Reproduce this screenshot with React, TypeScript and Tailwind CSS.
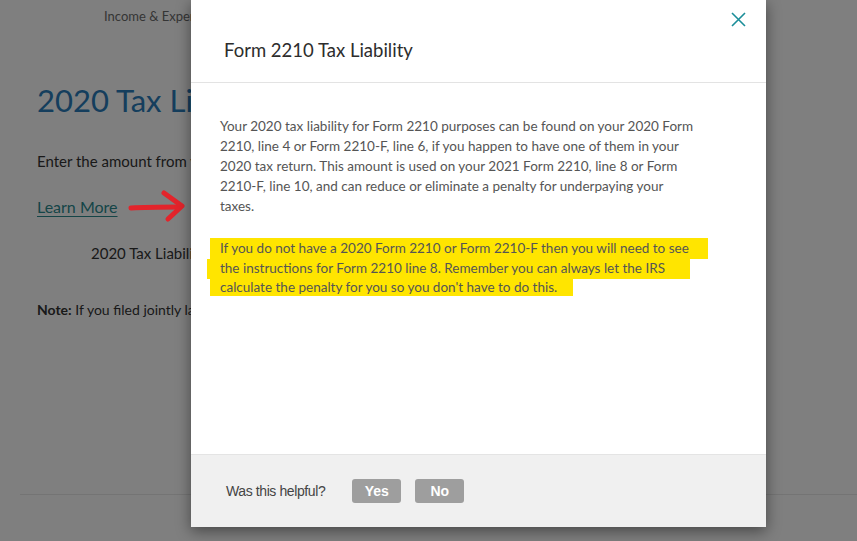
import React from "react";

const P1 = [
  "Your 2020 tax liability for Form 2210 purposes can be found on your 2020 Form",
  "2210, line 4 or Form 2210-F, line 6, if you happen to have one of them in your",
  "2020 tax return. This amount is used on your 2021 Form 2210, line 8 or Form",
  "2210-F, line 10, and can reduce or eliminate a penalty for underpaying your",
  "taxes.",
];

export default function App() {
  return (
    <div className="relative w-[857px] h-[541px] overflow-hidden bg-white" style={{ fontFamily: "Lato, 'Open Sans', sans-serif" }}>
      {/* underlying page */}
      <div className="pt-[6px]">
        <div className="w-[191px] overflow-hidden whitespace-nowrap pl-[37px]">
          <div className="pl-[67px] text-[13px] text-[#6b6b6b] h-[20px] leading-[20px]">Income &amp; Expenses</div>
          <h1 className="mt-[54px] text-[31px] leading-[40px] text-[#2a7dba] font-normal">2020 Tax Liability</h1>
          <p className="mt-[31px] text-[15px] leading-[20px] text-[#333]">Enter the amount from your 2020 tax return.</p>
          <div className="mt-[26px] flex items-center h-[20px]">
            <span className="text-[16px] text-[#2b8a8f] underline underline-offset-[3px]">Learn More</span>
          </div>
          <div className="mt-[26px] pl-[54px] text-[15px] leading-[20px] text-[#333]">2020 Tax Liability</div>
          <p className="mt-[37px] text-[14px] leading-[20px] text-[#333]"><b>Note:</b> If you filed jointly last year</p>
        </div>
        <div className="mt-[174px] ml-[20px] h-px bg-[#e8e8e8]" />
      </div>
      {/* overlay */}
      <div className="absolute inset-0 bg-black/50" />
      {/* red arrow annotation */}
      <svg className="absolute left-[124px] top-[186px]" width="66" height="40" viewBox="0 0 66 40">
        <path d="M7 22 C 22 21, 40 21, 56 21" stroke="#e3242b" strokeWidth="5" strokeLinecap="round" fill="none" />
        <path d="M40 7 L58 20 L44 33" stroke="#e3242b" strokeWidth="5" strokeLinecap="round" strokeLinejoin="round" fill="none" />
      </svg>
      {/* modal */}
      <div className="absolute left-[191px] top-0 w-[575px] h-[527px] bg-white flex flex-col shadow-[0_4px_14px_rgba(0,0,0,0.45)]">
        <div className="relative h-[83px] border-b border-[#e3e3e3] flex items-center pl-[33px] pt-[19px]">
          <h2 className="text-[18.5px] text-[#2d2d2d] font-normal">Form 2210 Tax Liability</h2>
          <svg className="absolute left-[540px] top-[12px]" width="15" height="15" viewBox="0 0 15 15">
            <path d="M1 1 L14 14 M14 1 L1 14" stroke="#1b8e99" strokeWidth="1.6" />
          </svg>
        </div>
        <div className="flex-1 pl-[29px] pr-[30px] pt-[33px] text-[13.5px] leading-[20px] text-[#555]">
          <p>
            {P1.map((l) => (
              <span key={l} className="block whitespace-nowrap">{l}</span>
            ))}
          </p>
          <div className="mt-[22px] flex flex-col items-start">
            <span className="block h-[21px] w-[498px] ml-[-10px] pl-[10px] bg-[#ffe500] leading-[20px] whitespace-nowrap">If you do not have a 2020 Form 2210 or Form 2210-F then you will need to see</span>
            <span className="block h-[20px] w-[483px] ml-[-13px] pl-[13px] bg-[#ffe500] leading-[18px] whitespace-nowrap">the instructions for Form 2210 line 8. Remember you can always let the IRS</span>
            <span className="block h-[17px] w-[363px] ml-[-10px] pl-[10px] bg-[#ffe500] leading-[16px] whitespace-nowrap">calculate the penalty for you so you don't have to do this.</span>
          </div>
        </div>
        <div className="h-[73px] bg-[#f0f0f0] border-t border-[#e4e4e4] flex items-center pl-[35px] gap-[14px]" style={{ fontFamily: "'Liberation Sans', Arial, sans-serif" }}>
          <span className="text-[14px] tracking-[-0.4px] text-[#444] mr-[13px]">Was this helpful?</span>
          <button className="w-[49px] h-[24px] rounded-[3px] bg-[#9e9e9e] text-white font-bold text-[14px]">Yes</button>
          <button className="w-[49px] h-[24px] rounded-[3px] bg-[#9e9e9e] text-white font-bold text-[14px]">No</button>
        </div>
      </div>
    </div>
  );
}
